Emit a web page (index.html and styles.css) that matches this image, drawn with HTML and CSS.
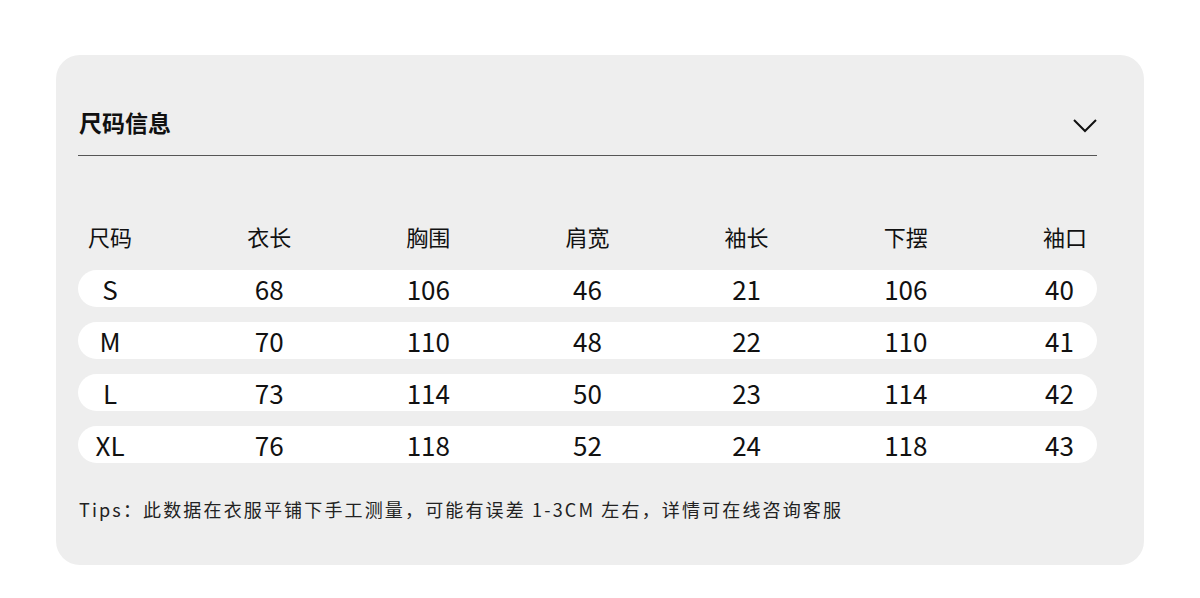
FILE: index.html
```html
<!DOCTYPE html>
<html lang="zh">
<head>
<meta charset="utf-8">
<title>尺码信息</title>
<link rel="stylesheet" href="styles.css">
</head>
<body>
<div class="card">
  <div class="head">
    <div class="title">尺码信息</div>
    <svg class="chev" width="24" height="14" viewBox="0 0 24 14"><path d="M1 1 L12 12 L23 1" fill="none" stroke="#111" stroke-width="2"/></svg>
  </div>
  <div class="thead">
    <span class="cell">尺码</span>
    <span class="cell">衣长</span>
    <span class="cell">胸围</span>
    <span class="cell">肩宽</span>
    <span class="cell">袖长</span>
    <span class="cell">下摆</span>
    <span class="cell">袖口</span>
  </div>
  <div class="rows">
    <div class="row"><span class="cell">S</span><span class="cell">68</span><span class="cell">106</span><span class="cell">46</span><span class="cell">21</span><span class="cell">106</span><span class="cell">40</span></div>
    <div class="row"><span class="cell">M</span><span class="cell">70</span><span class="cell">110</span><span class="cell">48</span><span class="cell">22</span><span class="cell">110</span><span class="cell">41</span></div>
    <div class="row"><span class="cell">L</span><span class="cell">73</span><span class="cell">114</span><span class="cell">50</span><span class="cell">23</span><span class="cell">114</span><span class="cell">42</span></div>
    <div class="row"><span class="cell">XL</span><span class="cell">76</span><span class="cell">118</span><span class="cell">52</span><span class="cell">24</span><span class="cell">118</span><span class="cell">43</span></div>
  </div>
  <div class="tips">Tips：此数据在衣服平铺下手工测量，可能有误差 1-3CM 左右，详情可在线咨询客服</div>
</div>
</body>
</html>
```
FILE: styles.css
```css
html, body {
  margin: 0;
  padding: 0;
  background: #ffffff;
}
body {
  font-family: "Noto Sans CJK SC", "Noto Sans", sans-serif;
  color: #111;
}
.card {
  box-sizing: border-box;
  width: 1088px;
  height: 510px;
  margin: 55px 0 0 56px;
  padding: 0 47px 0 22px;
  background: #eeeeee;
  border-radius: 24px;
}
.head {
  display: flex;
  justify-content: space-between;
  align-items: flex-start;
  box-sizing: border-box;
  height: 101px;
  padding-top: 52px;
  border-bottom: 1px solid #555;
}
.title {
  font-size: 23px;
  font-weight: 700;
  line-height: 30px;
  padding-left: 1px;
}
.chev {
  margin-top: 12px;
}
.thead, .row {
  display: flex;
  justify-content: space-between;
  align-items: center;
}
.thead {
  margin-top: 65px;
  height: 30px;
  font-size: 22px;
  line-height: 30px;
}
.cell {
  box-sizing: border-box;
  width: 64px;
  text-align: center;
  white-space: nowrap;
}
.rows {
  display: flex;
  flex-direction: column;
  gap: 15px;
  margin-top: 19px;
}
.row {
  height: 37px;
  background: #ffffff;
  border-radius: 19px;
  font-size: 26px;
  line-height: 37px;
}
.row .cell:last-child {
  padding-right: 11px;
}
.tips {
  margin-top: 33px;
  padding-left: 1px;
  font-size: 18px;
  line-height: 26px;
  letter-spacing: 2.15px;
  color: #222;
}
```
